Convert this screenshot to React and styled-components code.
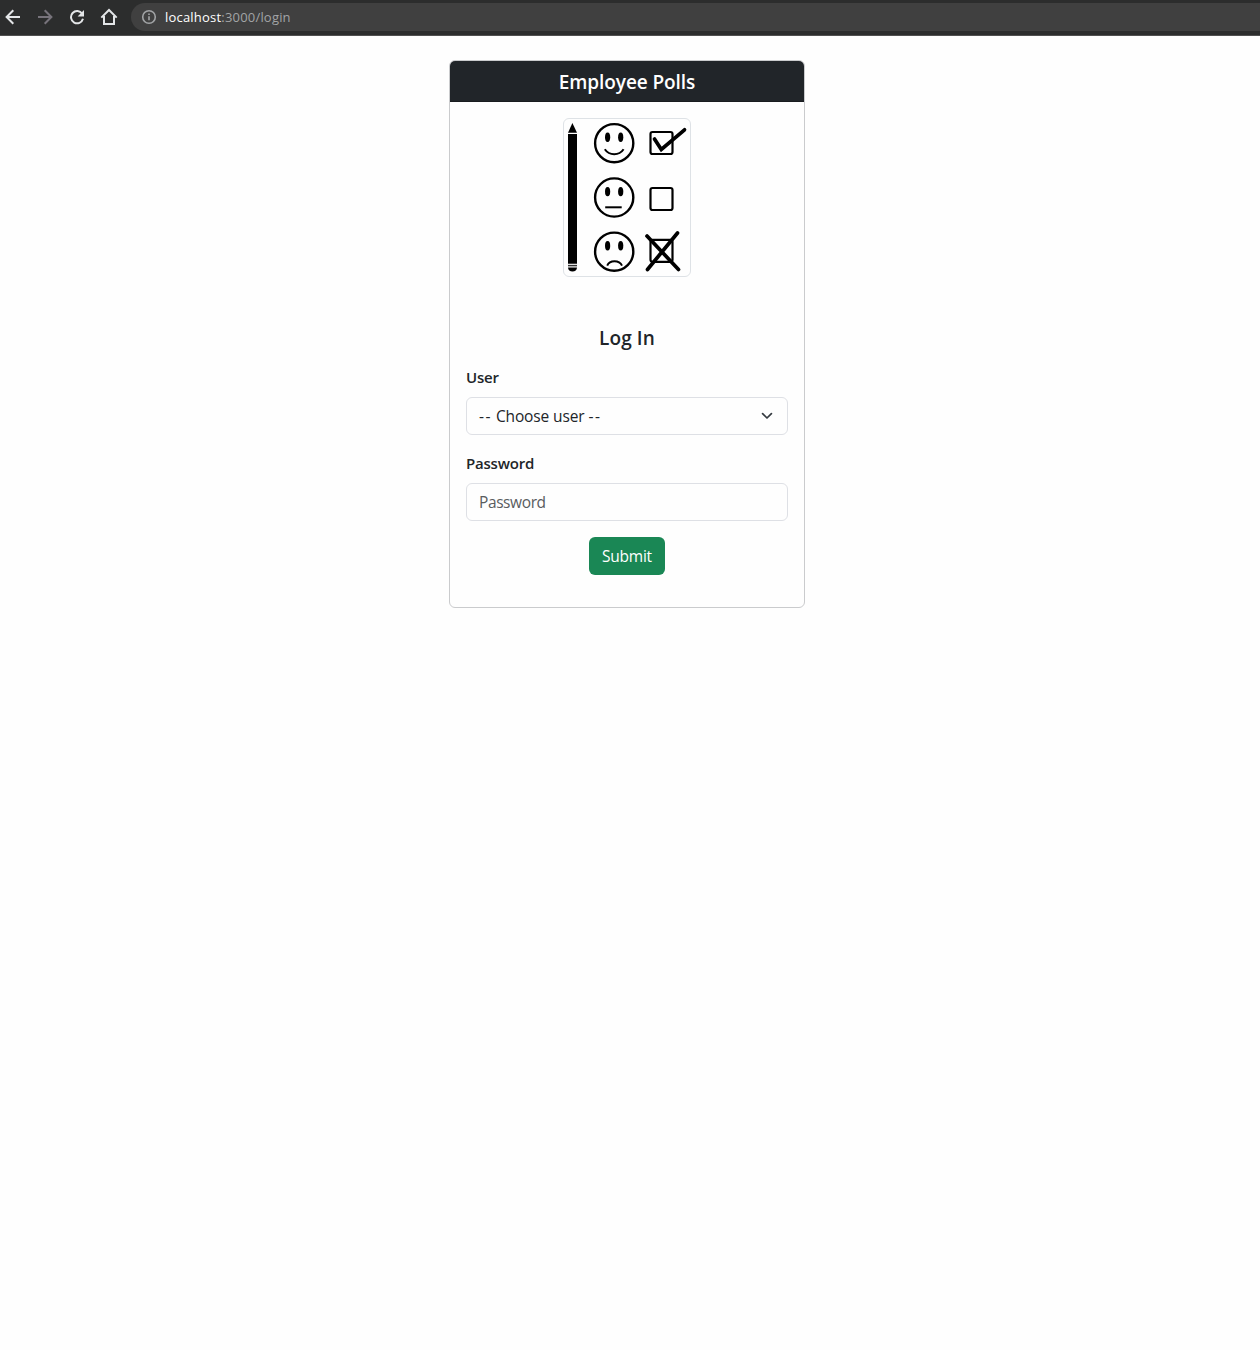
import React from "react";
import styled, { createGlobalStyle } from "styled-components";

const GlobalStyle = createGlobalStyle`
  *, *::before, *::after { box-sizing: border-box; }
  body {
    margin: 0;
    background: #fefefe;
    color: #212529;
    font-family: "Open Sans", "Noto Sans", sans-serif;
    font-size: 15.5px;
    line-height: 24px;
  }
`;

const Page = styled.div`
  min-height: 1350px;
  display: flex;
  flex-direction: column;
  align-items: center;
`;

const Toolbar = styled.header`
  align-self: stretch;
  height: 36px;
  padding: 3px 0 4px 5px;
  display: flex;
  align-items: flex-start;
  background: #2c2d2d;
  border-bottom: 1px solid #505050;
`;

const NavButton = styled.span`
  width: 16px;
  height: 28px;
  margin-right: ${(p) => p.$gap || 16}px;
  display: flex;
  align-items: center;
  justify-content: center;
  flex: none;
  color: ${(p) => (p.$dim ? "#77737b" : "#e4e6e8")};

  svg {
    flex: none;
  }
`;

const Address = styled.div`
  flex: 1;
  height: 28px;
  padding-left: 10px;
  display: flex;
  align-items: center;
  gap: 8px;
  background: #404040;
  border-radius: 14px 0 0 14px;
  color: #a2a4a6;
  font-size: 13px;
  letter-spacing: ${(p) => p.$tracking}px;
`;

const Host = styled.span`
  color: #ffffff;
`;

const Card = styled.main`
  width: 356px;
  height: 548px;
  margin: 24px 6px 0 0;
  border: 1px solid #cacbcd;
  border-radius: 6px;
`;

const CardHeader = styled.div`
  height: 41px;
  display: flex;
  align-items: center;
  justify-content: center;
  background: #212529;
  border-bottom: 1px solid #191c1f;
  border-radius: 5px 5px 0 0;
  color: #ffffff;
  font-size: 19px;
  font-weight: 600;
  letter-spacing: ${(p) => p.$tracking}px;
  padding-top: 1px;
`;

const CardBody = styled.form`
  padding: 16px;
  display: flex;
  flex-direction: column;
  align-items: center;
`;

const Thumbnail = styled.div`
  width: 128px;
  height: 159px;
  border: 1px solid #dee2e6;
  border-radius: 6px;

  svg {
    display: block;
    margin: -1px;
  }
`;

const Title = styled.h1`
  margin: 49px 0 15px;
  font-size: 19px;
  line-height: 24px;
  font-weight: 600;
  letter-spacing: ${(p) => p.$tracking}px;
`;

const Label = styled.label`
  align-self: stretch;
  margin-bottom: 8px;
  font-size: 15px;
  font-weight: 600;
  letter-spacing: ${(p) => p.$tracking}px;
`;

const Control = styled.div`
  width: 322px;
  height: 38px;
  margin-bottom: ${(p) => p.$after}px;
  padding: 0 12px;
  display: flex;
  align-items: center;
  justify-content: space-between;
  border: 1px solid #dee0e5;
  border-radius: 6px;
  color: ${(p) => (p.$muted ? "#595c5f" : "#212529")};
  letter-spacing: ${(p) => p.$tracking}px;
`;

const Dashes = styled.span`
  letter-spacing: 1.5px;
`;

const Submit = styled.button`
  width: 76px;
  height: 38px;
  padding: 0;
  border: 0;
  border-radius: 6px;
  background: #1a8755;
  color: #ffffff;
  font: inherit;
  letter-spacing: ${(p) => p.$tracking}px;
`;

const BackIcon = ({ flip }) => (
  <svg width="16" height="16" viewBox="0 0 16 16" fill="none" stroke="currentColor" strokeWidth="2"
    transform={flip ? "scale(-1 1)" : undefined}>
    <path d="M15 8H2M8.3 1.3L1.6 8l6.7 6.7" />
  </svg>
);

const ReloadIcon = () => (
  <svg width="16" height="16" viewBox="0 0 16 16">
    <path d="M13.2 4.8A6.1 6.1 0 1 0 14 9.8" fill="none" stroke="currentColor" strokeWidth="2" />
    <path d="M15 1v6.4H8.6z" fill="currentColor" />
  </svg>
);

const HomeIcon = () => (
  <svg width="18" height="18" viewBox="0 0 18 18" fill="none" stroke="currentColor" strokeWidth="2">
    <path d="M1.3 9.6L9 2l7.7 7.6M4 8v8h10V8" />
  </svg>
);

const InfoIcon = () => (
  <svg width="16" height="16" viewBox="0 0 16 16" fill="none" stroke="#a2a4a6" strokeWidth="1.6">
    <circle cx="8" cy="8" r="6.3" />
    <path d="M8 7.2v4.1M8 4.4v1.6" />
  </svg>
);

const Chevron = () => (
  <svg width="16" height="12" viewBox="0 0 16 12" fill="none" stroke="#343a40" strokeWidth="1.7" strokeLinecap="round" strokeLinejoin="round">
    <path d="M3.6 3.7L8 8l4.4-4.3" />
  </svg>
);

const Face = ({ y, mouth }) => (
  <g transform={`translate(51.2 ${y})`}>
    <circle r="19.1" fill="none" stroke="#000" strokeWidth="2.4" />
    <ellipse cx="-6.6" cy="-5.9" rx="2.6" ry="4.7" />
    <ellipse cx="6.5" cy="-5.9" rx="2.6" ry="4.7" />
    <path d={mouth} fill="none" stroke="#000" strokeWidth="2" />
  </g>
);

const Box = ({ y }) => (
  <rect x="87.5" y={y} width="22" height="22" rx="2" fill="none" stroke="#000" strokeWidth="2.2" />
);

const PollDrawing = () => (
  <svg width="128" height="159" viewBox="0 0 128 159">
    <path d="M9.4 5L14 14.7H5z" />
    <path d="M5 16h9v129.8H5z" />
    <path d="M5 147.6h9" stroke="#333" strokeWidth="1.5" />
    <path d="M5 149.5h9c0 2.4-2 4-4.5 4S5 151.9 5 149.5z" />
    <Face y={25.2} mouth="M-9.4 6Q-6 11 0 11T9.4 6" />
    <Face y={79.5} mouth="M-9 9.8H7.5" />
    <Face y={133.7} mouth="M-7 13.9C-4.5 8.2 5 8.2 7.8 13.9" />
    <Box y={14} />
    <Box y={70} />
    <Box y={121.8} />
    <g fill="none" stroke="#000" strokeWidth="3.7" strokeLinecap="round">
      <path d="M91.5 21L98.3 31.5 121.5 11.8" />
      <path d="M84 118L115.5 151.5M114.5 115L84.5 151.5" />
    </g>
  </svg>
);

export default function App() {
  return (
    <>
      <GlobalStyle />
      <Page>
        <Toolbar>
          <NavButton><BackIcon /></NavButton>
          <NavButton $dim><BackIcon flip /></NavButton>
          <NavButton><ReloadIcon /></NavButton>
          <NavButton $gap={14}><HomeIcon /></NavButton>
          <Address $tracking={0.2}>
            <InfoIcon />
            <span><Host>localhost</Host>:3000/login</span>
          </Address>
        </Toolbar>
        <Card>
          <CardHeader $tracking={-0.08}>Employee Polls</CardHeader>
          <CardBody>
            <Thumbnail><PollDrawing /></Thumbnail>
            <Title $tracking={0.1}>Log In</Title>
            <Label $tracking={-0.2}>User</Label>
            <Control $after={16} $tracking={-0.12}>
              <span><Dashes>--</Dashes> Choose user <Dashes>--</Dashes></span>
              <Chevron />
            </Control>
            <Label $tracking={-0.2}>Password</Label>
            <Control $after={16} $muted $tracking={-0.4}>Password</Control>
            <Submit type="button" $tracking={-0.25}>Submit</Submit>
          </CardBody>
        </Card>
      </Page>
    </>
  );
}
